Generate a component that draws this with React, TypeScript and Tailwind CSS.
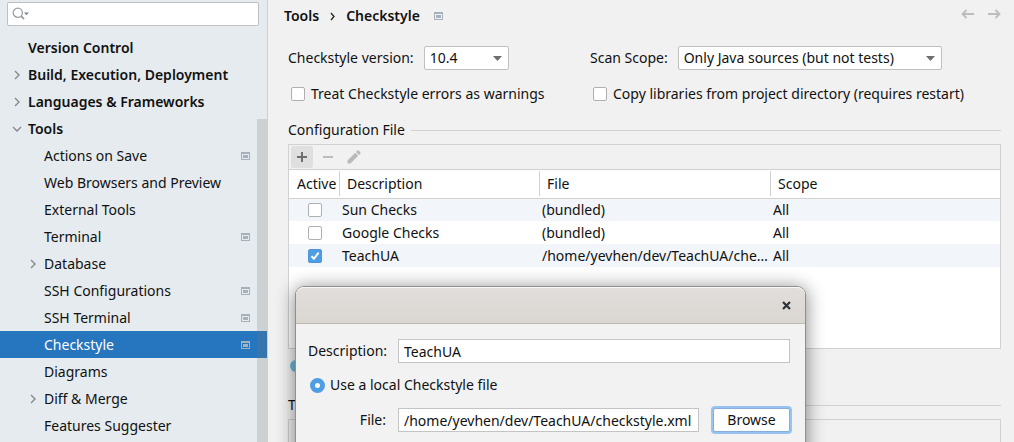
import { useState, type ReactNode } from "react";
import clsx from "clsx";

interface TreeItem {
  label: string;
  level: 0 | 1;
  arrow?: "right" | "down";
  projectLevel?: boolean;
}

interface ConfigRow {
  description: string;
  file: string;
  scope: string;
  active: boolean;
}

const TREE: TreeItem[] = [
  { label: "Version Control", level: 0 },
  { label: "Build, Execution, Deployment", level: 0, arrow: "right" },
  { label: "Languages & Frameworks", level: 0, arrow: "right" },
  { label: "Tools", level: 0, arrow: "down" },
  { label: "Actions on Save", level: 1, projectLevel: true },
  { label: "Web Browsers and Preview", level: 1 },
  { label: "External Tools", level: 1 },
  { label: "Terminal", level: 1, projectLevel: true },
  { label: "Database", level: 1, arrow: "right" },
  { label: "SSH Configurations", level: 1, projectLevel: true },
  { label: "SSH Terminal", level: 1, projectLevel: true },
  { label: "Checkstyle", level: 1, projectLevel: true },
  { label: "Diagrams", level: 1 },
  { label: "Diff & Merge", level: 1, arrow: "right" },
  { label: "Features Suggester", level: 1 },
];

const CONFIG_ROWS: ConfigRow[] = [
  { description: "Sun Checks", file: "(bundled)", scope: "All", active: false },
  { description: "Google Checks", file: "(bundled)", scope: "All", active: false },
  {
    description: "TeachUA",
    file: "/home/yevhen/dev/TeachUA/checkstyle.xml",
    scope: "All",
    active: true,
  },
];

function ProjectIcon() {
  return (
    <svg width="9" height="8" viewBox="0 0 9 8" className="shrink-0" aria-hidden="true">
      <path d="M0 0h9v8H0zM1 2v5h7V2z" fill="#a6b1bb" fillRule="evenodd" />
      <path d="M2 3h5v3H2z" fill="#a6b1bb" />
    </svg>
  );
}

function TreeArrow({ direction }: { direction?: "right" | "down" }) {
  return (
    <svg
      width="10"
      height="10"
      viewBox="0 0 10 10"
      fill="none"
      stroke="#868a8e"
      strokeWidth="1.4"
      className="shrink-0"
      aria-hidden="true"
    >
      {direction === "right" && <path d="M3 1l4 4-4 4" />}
      {direction === "down" && <path d="M1 3l4 4 4-4" />}
    </svg>
  );
}

function CheckBox({
  id,
  label,
  checked,
  onChange,
}: {
  id: string;
  label?: string;
  checked: boolean;
  onChange: () => void;
}) {
  return (
    <span className="relative block size-3.5 shrink-0">
      <input
        id={id}
        type="checkbox"
        aria-label={label}
        checked={checked}
        onChange={onChange}
        className="block size-3.5 appearance-none rounded-xs border border-[#b0b0b0] bg-white checked:border-[#4a96dd] checked:bg-[#4f9ee3]"
      />
      {checked && (
        <svg
          viewBox="0 0 14 14"
          fill="none"
          stroke="#fff"
          strokeWidth="2"
          className="pointer-events-none absolute inset-0"
          aria-hidden="true"
        >
          <path d="M3.5 7.2l2.4 2.6L10.6 3.6" />
        </svg>
      )}
    </span>
  );
}

function Dropdown({
  id,
  options,
  className,
}: {
  id: string;
  options: string[];
  className: string;
}) {
  return (
    <span className={clsx("relative block", className)}>
      <select
        id={id}
        className="block h-6 w-full appearance-none rounded-xs border border-[#c0c0c0] bg-white pl-[5px] leading-[22px]"
      >
        {options.map((o) => (
          <option key={o}>{o}</option>
        ))}
      </select>
      <svg
        width="9"
        height="5"
        viewBox="0 0 9 5"
        className="pointer-events-none absolute top-2.5 right-[7px]"
        aria-hidden="true"
      >
        <path d="M0 0h9L4.5 5z" fill="#6e6e6e" />
      </svg>
    </span>
  );
}

function SectionTitle({ children }: { children: ReactNode }) {
  return (
    <div className="flex h-5 items-center gap-1.5">
      <h2>{children}</h2>
      <div className="h-px flex-1 bg-[#d1d1d1]" />
    </div>
  );
}

function Sidebar() {
  const [selected, setSelected] = useState("Checkstyle");

  return (
    <aside className="relative w-[268px] shrink-0 overflow-hidden border-r border-[#d0d0d0] bg-[#e5ebef] pt-0.5">
      <div className="relative mr-2 ml-[7px]">
        <input
          type="search"
          aria-label="Search settings"
          className="block h-6 w-full rounded-xs border border-[#c0c0c0] bg-white pl-6 outline-none"
        />
        <svg
          width="17"
          height="13"
          viewBox="0 0 17 13"
          fill="none"
          className="pointer-events-none absolute top-[5px] left-[5px]"
          aria-hidden="true"
        >
          <circle cx="5.8" cy="5.8" r="4.6" stroke="#9aa0a5" strokeWidth="1.3" />
          <path d="M9 9l3 3" stroke="#9aa0a5" strokeWidth="1.8" />
          <path d="M12 5.500h5L14.500 8.300z" fill="#7f868c" />
        </svg>
      </div>

      <ul className="mt-2">
        {TREE.map((item) => (
          <li key={item.label}>
            <button
              type="button"
              onClick={() => setSelected(item.label)}
              className={clsx(
                "flex h-[27px] w-full items-center gap-1.5 pr-[17px] text-left",
                item.level === 0 ? "pl-3 font-semibold" : "pl-7",
                item.label === selected && "bg-[#2675bf] text-white"
              )}
            >
              <TreeArrow direction={item.arrow} />
              <span className="flex-1 whitespace-nowrap">{item.label}</span>
              {item.projectLevel && <ProjectIcon />}
            </button>
          </li>
        ))}
      </ul>

      {/* scrollbar thumb */}
      <div className="pointer-events-none absolute top-[119px] right-0 bottom-0 w-2.5 bg-[#787878]/22" />
    </aside>
  );
}

function ConfigTable() {
  const [rows, setRows] = useState(CONFIG_ROWS);

  const toggle = (description: string) => {
    setRows((prev) =>
      prev.map((r) =>
        r.description === description ? { ...r, active: !r.active } : r
      )
    );
  };

  return (
    <div className="mt-1 h-[205px] border border-[#d1d1d1] bg-white">
      <div className="flex h-[25px] items-center gap-1 border-b border-[#d1d1d1] bg-[#f1f1f1] pl-0.5">
        <button
          type="button"
          aria-label="Add"
          className="flex size-[22px] items-center justify-center rounded-xs bg-[#dfdfdf]"
        >
          <svg width="10" height="10" viewBox="0 0 10 10" aria-hidden="true">
            <path d="M4 0h2v4h4v2H6v4H4V6H0V4h4z" fill="#6e6e6e" />
          </svg>
        </button>
        <button
          type="button"
          aria-label="Remove"
          className="flex size-[22px] items-center justify-center"
        >
          <svg width="10" height="2" viewBox="0 0 10 2" aria-hidden="true">
            <path d="M0 0h10v2H0z" fill="#bdbdbd" />
          </svg>
        </button>
        <button
          type="button"
          aria-label="Edit"
          className="flex size-[22px] items-center justify-center"
        >
          <svg width="14" height="14" viewBox="0 0 14 14" aria-hidden="true">
            <path
              d="M.5 13.500v-3L8.200 2.800l3 3-7.700 7.700zM9 2l1.400-1.400a.8.8 0 0 1 1.200 0l1.800 1.800a.8.8 0 0 1 0 1.200L12 5z"
              fill="#b9b9b9"
            />
          </svg>
        </button>
      </div>

      <table className="w-full table-fixed border-collapse">
        <colgroup>
          <col className="w-[50px]" />
          <col className="w-[200px]" />
          <col className="w-[231px]" />
          <col />
        </colgroup>
        <thead>
          <tr className="h-7 border-b border-[#d1d1d1] text-left">
            <th className="p-0 pl-2 font-normal">Active</th>
            {["Description", "File", "Scope"].map((name) => (
              <th key={name} className="p-0 font-normal">
                <div className="h-[25px] border-l border-[#d1d1d1] pl-[7px] leading-[25px]">
                  {name}
                </div>
              </th>
            ))}
          </tr>
        </thead>
        <tbody>
          {rows.map((row) => (
            <tr key={row.description} className="h-[23px] odd:bg-[#f2f5fa]">
              <td className="p-0 pl-[19px]">
                <CheckBox
                  id={`active-${row.description}`}
                  label={`${row.description} active`}
                  checked={row.active}
                  onChange={() => toggle(row.description)}
                />
              </td>
              <td className="truncate p-0 pl-[3px]">{row.description}</td>
              <td className="truncate p-0 pl-[3px]">{row.file}</td>
              <td className="truncate p-0 pl-[3px]">{row.scope}</td>
            </tr>
          ))}
        </tbody>
      </table>
    </div>
  );
}

function LocalFileDialog() {
  const [description, setDescription] = useState("TeachUA");
  const [file, setFile] = useState("/home/yevhen/dev/TeachUA/checkstyle.xml");

  return (
    <div
      role="dialog"
      aria-label="Add configuration file"
      className="absolute top-[287px] left-[296px] h-80 w-[509px] rounded-t-lg bg-[#f2f2f2] shadow-[0_0_0_1px_#8f8f8f,0_2px_18px_2px_rgba(0,0,0,0.45)]"
    >
      <div className="flex h-[37px] items-center justify-end rounded-t-lg border-t border-b border-t-[#f8f7f6] border-b-[#bfb8b1] bg-linear-to-b from-[#e1dedb] to-[#dad6d2] pr-3.5">
        <button type="button" aria-label="Close">
          <svg
            width="9"
            height="9"
            viewBox="0 0 9 9"
            stroke="#2e3436"
            strokeWidth="2.2"
            aria-hidden="true"
          >
            <path d="M1 1l7 7M8 1L1 8" />
          </svg>
        </button>
      </div>

      <div className="pt-[15px] pr-[15px] pl-3">
        <div className="flex items-center">
          <label htmlFor="description" className="w-[90px]">
            Description:
          </label>
          <input
            id="description"
            type="text"
            value={description}
            onChange={(e) => setDescription(e.target.value)}
            className="h-6 min-w-0 flex-1 border border-[#c4c4c4] bg-white px-[5px] outline-none"
          />
        </div>

        <div className="mt-3 flex h-5 items-center gap-[5px] pl-0.5">
          <input
            id="local-file"
            type="radio"
            defaultChecked
            className="size-[15px] appearance-none rounded-full border-5 border-[#4f9ee3] bg-white"
          />
          <label htmlFor="local-file">Use a local Checkstyle file</label>
        </div>

        <div className="mt-[13px] flex items-center">
          <label htmlFor="file" className="w-[90px] pr-3 text-right">
            File:
          </label>
          <input
            id="file"
            type="text"
            value={file}
            onChange={(e) => setFile(e.target.value)}
            className="h-6 min-w-0 flex-1 border border-[#c4c4c4] bg-white px-[5px] outline-none"
          />
          <button
            type="button"
            className="ml-3.5 h-6 w-[77px] rounded-xs border border-[#87afda] bg-white ring-2 ring-[#97c3f3]"
          >
            Browse
          </button>
        </div>
      </div>
    </div>
  );
}

export default function App() {
  const [asWarnings, setAsWarnings] = useState(false);
  const [copyLibs, setCopyLibs] = useState(false);

  return (
    <div className="relative flex h-screen overflow-hidden bg-[#f1f1f1] font-['Noto_Sans',sans-serif] text-sm leading-5 text-[#111]">
      <Sidebar />

      <main className="min-w-0 flex-1 pr-[13px] pl-5">
        <header className="-ml-1 flex h-8 items-center">
          <nav className="flex items-center font-semibold" aria-label="Breadcrumb">
            <a href="#tools">Tools</a>
            <svg
              width="5"
              height="9"
              viewBox="0 0 5 9"
              fill="none"
              stroke="#222"
              strokeWidth="1.3"
              className="mx-[11px]"
              aria-hidden="true"
            >
              <path d="M1 1l3 3.500L1 8" />
            </svg>
            <h1 className="mr-3.5">Checkstyle</h1>
            <ProjectIcon />
          </nav>
          <div className="mb-1 ml-auto flex gap-3.5">
            <button type="button" aria-label="Back">
              <svg width="13" height="10" viewBox="0 0 13 10" fill="none" stroke="#bdbdbd" strokeWidth="1.8" aria-hidden="true">
                <path d="M13 5H1.500M5.500 1l-4 4 4 4" />
              </svg>
            </button>
            <button type="button" aria-label="Forward">
              <svg width="13" height="10" viewBox="0 0 13 10" fill="none" stroke="#bdbdbd" strokeWidth="1.8" aria-hidden="true">
                <path d="M0 5h11.500M7.500 1l4 4-4 4" />
              </svg>
            </button>
          </div>
        </header>

        <div className="mt-3.5 grid grid-cols-[302px_1fr] gap-y-3">
          <div className="flex items-center gap-2.5">
            <label htmlFor="version">Checkstyle version:</label>
            <Dropdown id="version" options={["10.4", "10.3.4", "9.3"]} className="w-[85px]" />
          </div>
          <div className="flex items-center gap-2.5">
            <label htmlFor="scope">Scan Scope:</label>
            <Dropdown
              id="scope"
              options={["Only Java sources (but not tests)", "All sources"]}
              className="w-[264px]"
            />
          </div>
          <div className="flex h-6 items-center gap-1.5 pl-[3px]">
            <CheckBox
              id="warnings"
              checked={asWarnings}
              onChange={() => setAsWarnings(!asWarnings)}
            />
            <label htmlFor="warnings">Treat Checkstyle errors as warnings</label>
          </div>
          <div className="flex h-6 items-center gap-1.5 pl-[3px]">
            <CheckBox
              id="copy-libs"
              checked={copyLibs}
              onChange={() => setCopyLibs(!copyLibs)}
            />
            <label htmlFor="copy-libs" className="whitespace-nowrap">
              Copy libraries from project directory (requires restart)
            </label>
          </div>
        </div>

        <section className="mt-3.5">
          <SectionTitle>Configuration File</SectionTitle>
          <ConfigTable />
          <div className="flex h-[34px] items-center pl-0.5">
            <svg width="12" height="12" viewBox="0 0 12 12" aria-hidden="true">
              <circle cx="6" cy="6" r="6" fill="#6fb8d6" />
              <path d="M5 5h2v4.500H5zM5 2.500h2v1.600H5z" fill="#fff" />
            </svg>
          </div>
        </section>

        <section className="mt-3">
          <SectionTitle>Third-Party Checks</SectionTitle>
          <div className="mt-1 h-20 border border-[#d1d1d1]">
            <div className="h-[25px] border-b border-[#d1d1d1]" />
          </div>
        </section>
      </main>

      <LocalFileDialog />
    </div>
  );
}
